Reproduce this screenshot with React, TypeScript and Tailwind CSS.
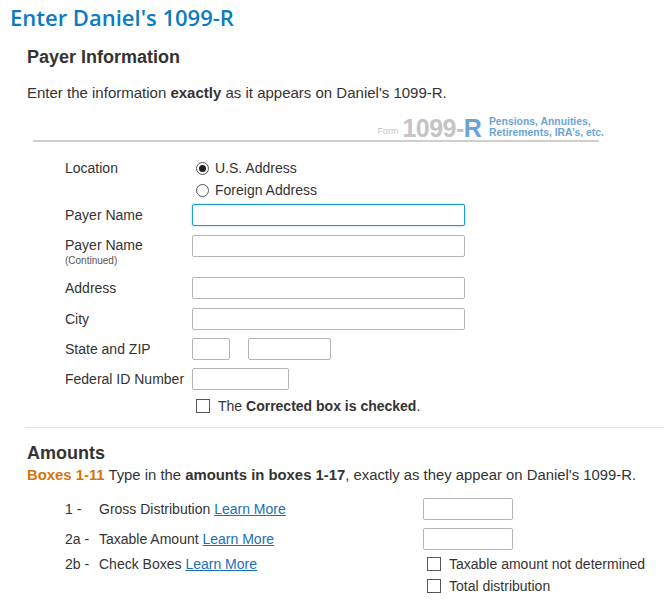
import React from "react";

const Input = ({ w, focused }: { w: string; focused?: boolean }) => (
  <div
    className={
      "h-[22px] rounded-[2px] bg-white " +
      w +
      (focused
        ? " border border-[#1a9bde] shadow-[0_0_2px_#7cc4ee]"
        : " border border-[#b5b5b5]")
    }
  />
);

const Radio = ({ checked }: { checked?: boolean }) => (
  <span className="w-[13px] h-[13px] rounded-full border border-[#555] bg-white flex items-center justify-center">
    {checked && <span className="w-[7px] h-[7px] rounded-full bg-[#222]" />}
  </span>
);

const Check = () => (
  <span className="w-[14px] h-[14px] border border-[#555] bg-white inline-block" />
);

const Label = ({ children }: { children: React.ReactNode }) => (
  <div className="w-[127px] shrink-0 text-[14px] text-[#333] leading-[16px]">{children}</div>
);

export default function App() {
  return (
    <div
      className="w-[664px] h-[608px] bg-white overflow-hidden text-[#333]"
      style={{ fontFamily: '"Liberation Sans", Arial, sans-serif' }}
    >
      <h1
        className="pl-[10px] pt-[4px] text-[22px] leading-[26px] text-[#0a7bc4] font-semibold"
        style={{ fontFamily: '"Open Sans", sans-serif' }}
      >
        Enter Daniel's 1099-R
      </h1>
      <div className="pl-[27px] mt-[17px]">
        <h2 className="text-[18px] font-bold leading-[20px] text-[#333]">Payer Information</h2>
        <p className="mt-[17px] text-[15px] leading-[17px]">
          Enter the information <b>exactly</b> as it appears on Daniel's 1099-R.
        </p>
      </div>
      {/* form logo */}
      <div className="ml-[33px] w-[566px] mt-[15px] border-b-2 border-[#cfcfcf] flex justify-end items-end pb-[1px]">
        <div className="flex items-end mr-[-5px]">
          <span className="text-[9px] text-[#c4c4c4] mr-[4px] mb-[1px]">Form</span>
          <span className="text-[25px] leading-[22px] font-bold text-[#c4c4c4] tracking-[-0.5px]">1099-</span>
          <span className="text-[25px] leading-[22px] font-bold text-[#6aa4d6]">R</span>
          <span className="ml-[7px] text-[10.4px] leading-[11px] font-bold text-[#6aa4d6] mb-[1px]">
            Pensions, Annuities,
            <br />
            Retirements, IRA’s, etc.
          </span>
        </div>
      </div>

      <div className="pl-[65px] mt-[18px] flex flex-col">
        <div className="flex">
          <Label>
            <div>Location</div>
          </Label>
          <div className="flex flex-col gap-[6px] pl-[4px] text-[14px] leading-[16px]">
            <div className="flex items-center gap-[6px]">
              <Radio checked />
              <span>U.S. Address</span>
            </div>
            <div className="flex items-center gap-[6px]">
              <Radio />
              <span>Foreign Address</span>
            </div>
          </div>
        </div>
        <div className="flex items-center mt-[6px]">
          <Label>Payer Name</Label>
          <Input w="w-[273px]" focused />
        </div>
        <div className="flex items-start mt-[9px]">
          <Label>
            <div className="pt-[2px]">Payer Name</div>
            <div className="text-[10px] leading-[13px] text-[#555] mt-[1px]">(Continued)</div>
          </Label>
          <Input w="w-[273px]" />
        </div>
        <div className="flex items-center mt-[10px]">
          <Label>Address</Label>
          <Input w="w-[273px]" />
        </div>
        <div className="flex items-center mt-[9px]">
          <Label>City</Label>
          <Input w="w-[273px]" />
        </div>
        <div className="flex items-center mt-[8px]">
          <Label>State and ZIP</Label>
          <Input w="w-[38px]" />
          <div className="ml-[18px]">
            <Input w="w-[83px]" />
          </div>
        </div>
        <div className="flex items-center mt-[8px]">
          <Label>Federal ID Number</Label>
          <Input w="w-[97px]" />
        </div>
        <div className="flex items-center mt-[8px] pl-[131px] gap-[8px] text-[14px] leading-[16px]">
          <Check />
          <span>
            The <b>Corrected box is checked</b>.
          </span>
        </div>
      </div>

      <div className="ml-[25px] mt-[13px] border-t border-[#e3e3e3]" />

      <div className="pl-[27px] mt-[15px]">
        <h2 className="text-[18px] font-bold leading-[20px]">Amounts</h2>
        <p className="mt-[4px] text-[14.85px] leading-[17px]">
          <b className="text-[#d3740c]">Boxes 1-11</b> Type in the <b>amounts in boxes 1-17</b>, exactly as they
          appear on Daniel's 1099-R.
        </p>
      </div>

      <div className="pl-[65px] mt-[14px] flex flex-col text-[14px] leading-[16px]">
        <div className="flex items-center">
          <span className="w-[34px]">1 -</span>
          <span className="w-[324px]">
            Gross Distribution <a className="text-[#1a6fb8] underline">Learn More</a>
          </span>
          <Input w="w-[90px]" />
        </div>
        <div className="flex items-center mt-[8px]">
          <span className="w-[34px]">2a -</span>
          <span className="w-[324px]">
            Taxable Amount <a className="text-[#1a6fb8] underline">Learn More</a>
          </span>
          <Input w="w-[90px]" />
        </div>
        <div className="flex items-start mt-[5px]">
          <span className="w-[34px] pt-[1px]">2b -</span>
          <span className="w-[328px] pt-[1px]">
            Check Boxes <a className="text-[#1a6fb8] underline">Learn More</a>
          </span>
          <div className="flex flex-col gap-[6px] pt-[1px]">
            <div className="flex items-center gap-[8px]">
              <Check />
              <span>Taxable amount not determined</span>
            </div>
            <div className="flex items-center gap-[8px]">
              <Check />
              <span>Total distribution</span>
            </div>
          </div>
        </div>
      </div>
    </div>
  );
}
